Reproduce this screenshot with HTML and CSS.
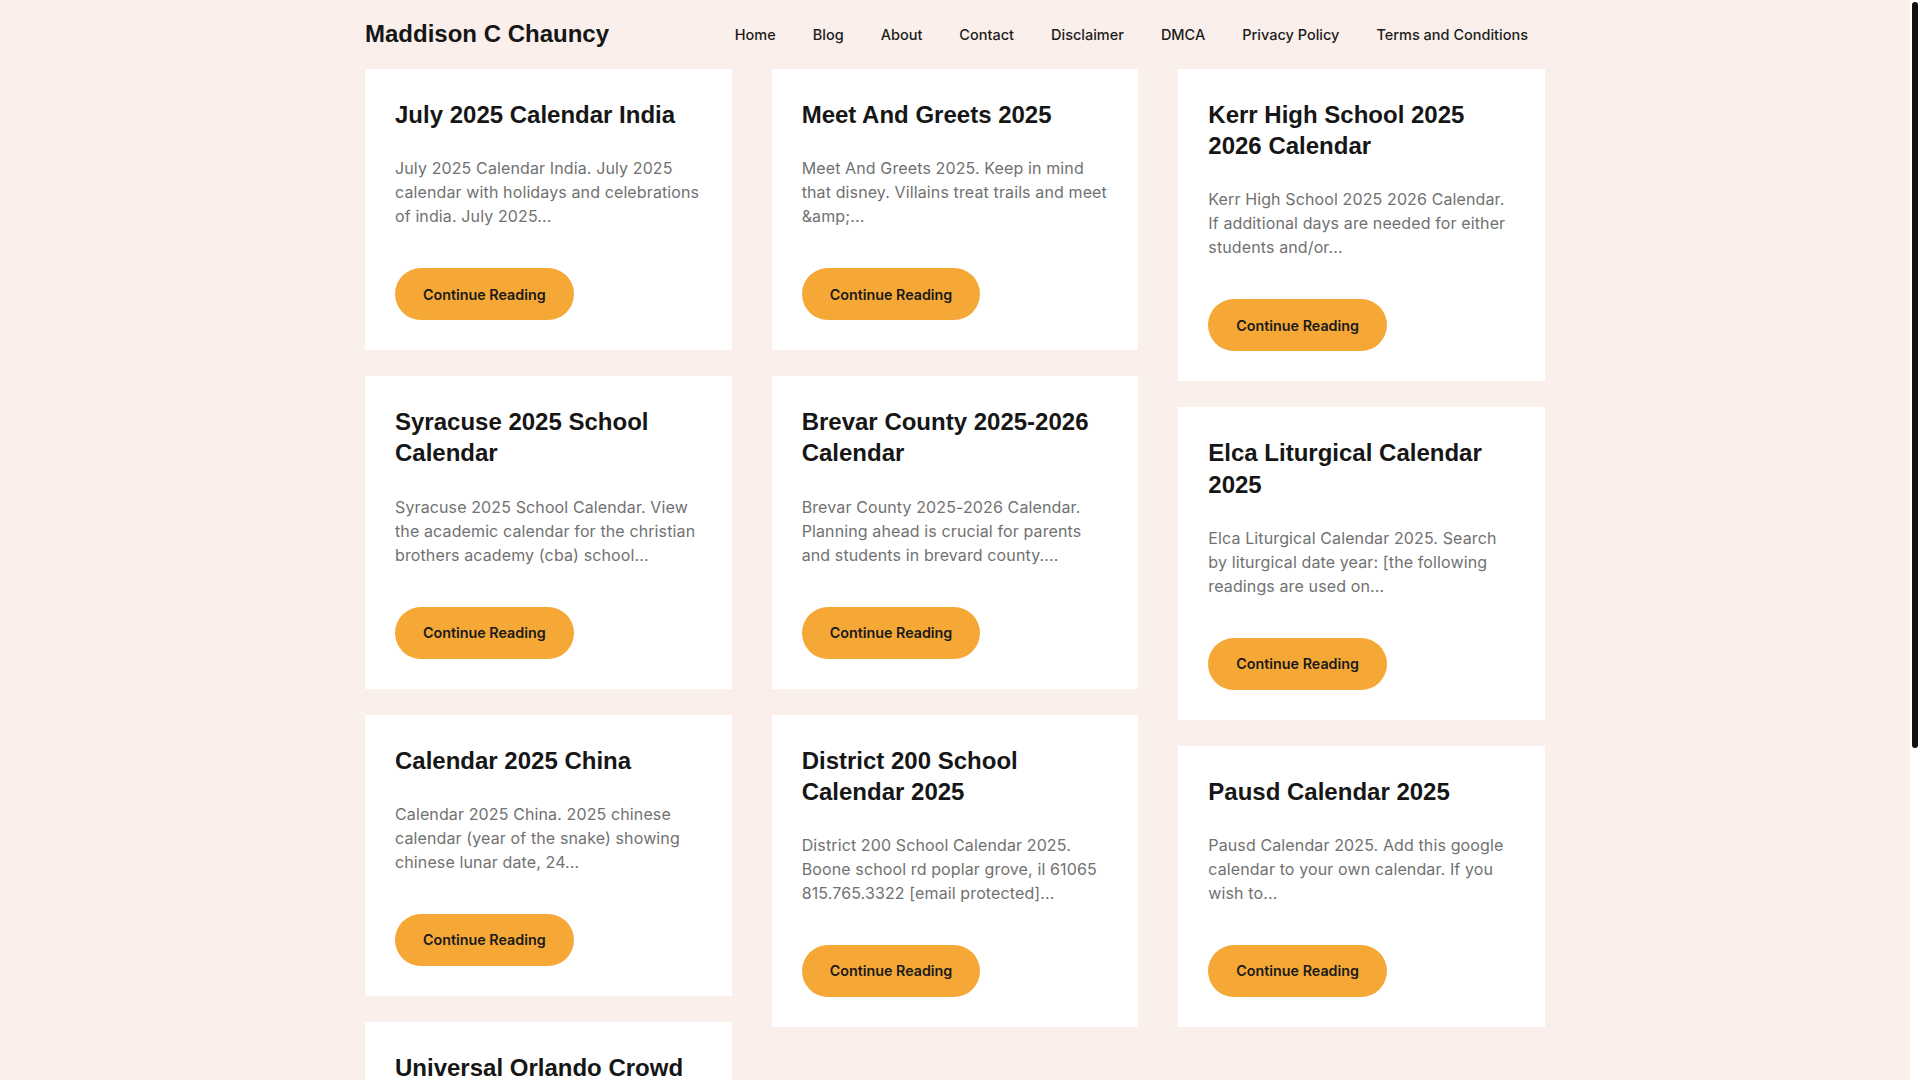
FILE: index.html
```html
<!DOCTYPE html>
<html lang="en">
<head>
<meta charset="utf-8">
<title>Maddison C Chauncy</title>
<link rel="stylesheet" href="styles.css">
</head>
<body>
<header class="site-header">
  <div class="container header-inner">
    <a class="site-title" href="#">Maddison C Chauncy</a>
    <nav class="main-nav">
      <ul>
        <li><a href="#">Home</a></li>
        <li><a href="#">Blog</a></li>
        <li><a href="#">About</a></li>
        <li><a href="#">Contact</a></li>
        <li><a href="#">Disclaimer</a></li>
        <li><a href="#">DMCA</a></li>
        <li><a href="#">Privacy Policy</a></li>
        <li><a href="#">Terms and Conditions</a></li>
      </ul>
    </nav>
  </div>
</header>

<main class="container posts">
  <div class="col">
    <article class="card">
      <h2>July 2025 Calendar India</h2>
      <p>July 2025 Calendar India. July 2025 calendar with holidays and celebrations of india. July 2025...</p>
      <a class="btn" href="#">Continue Reading</a>
    </article>
    <article class="card">
      <h2>Syracuse 2025 School Calendar</h2>
      <p>Syracuse 2025 School Calendar. View the academic calendar for the christian brothers academy (cba) school...</p>
      <a class="btn" href="#">Continue Reading</a>
    </article>
    <article class="card">
      <h2>Calendar 2025 China</h2>
      <p>Calendar 2025 China. 2025 chinese calendar (year of the snake) showing chinese lunar date, 24...</p>
      <a class="btn" href="#">Continue Reading</a>
    </article>
    <article class="card">
      <h2>Universal Orlando Crowd Calendar 2025</h2>
      <p>Universal Orlando Crowd Calendar 2025. Plan your visit with the crowd calendar for universal orlando...</p>
      <a class="btn" href="#">Continue Reading</a>
    </article>
  </div>
  <div class="col">
    <article class="card">
      <h2>Meet And Greets 2025</h2>
      <p>Meet And Greets 2025. Keep in mind that disney. Villains treat trails and meet &amp;amp;...</p>
      <a class="btn" href="#">Continue Reading</a>
    </article>
    <article class="card">
      <h2>Brevar County 2025-2026 Calendar</h2>
      <p>Brevar County 2025-2026 Calendar. Planning ahead is crucial for parents and students in brevard county....</p>
      <a class="btn" href="#">Continue Reading</a>
    </article>
    <article class="card">
      <h2>District 200 School Calendar 2025</h2>
      <p>District 200 School Calendar 2025. Boone school rd poplar grove, il 61065 815.765.3322 [email&#160;protected]...</p>
      <a class="btn" href="#">Continue Reading</a>
    </article>
  </div>
  <div class="col">
    <article class="card">
      <h2>Kerr High School 2025 2026 Calendar</h2>
      <p>Kerr High School 2025 2026 Calendar. If additional days are needed for either students and/or...</p>
      <a class="btn" href="#">Continue Reading</a>
    </article>
    <article class="card">
      <h2>Elca Liturgical Calendar 2025</h2>
      <p>Elca Liturgical Calendar 2025. Search by liturgical date year: [the following readings are used on...</p>
      <a class="btn" href="#">Continue Reading</a>
    </article>
    <article class="card">
      <h2>Pausd Calendar 2025</h2>
      <p>Pausd Calendar 2025. Add this google calendar to your own calendar. If you wish to...</p>
      <a class="btn" href="#">Continue Reading</a>
    </article>
  </div>
</main>

<footer class="site-footer">
  <div class="container footer-inner">
    <span>&copy; 2025 Maddison C Chauncy</span>
  </div>
</footer>

<div class="scrollbar" aria-hidden="true"><div class="scrollbar-thumb"></div></div>
</body>
</html>
```

FILE: styles.css
```css
html {
  background: #faefea;
}

body {
  margin: 0;
  padding-right: 10px;
  background: #faefea;
  color: #161616;
  font-family: Inter, "Noto Sans", sans-serif;
}

a {
  text-decoration: none;
  color: inherit;
}

.container {
  width: 1180px;
  margin: 0 auto;
}

.site-header {
  height: 69px;
}

.header-inner {
  height: 100%;
  display: flex;
  align-items: center;
  justify-content: space-between;
}

.site-title {
  font-family: "Liberation Sans", Arial, sans-serif;
  font-weight: 700;
  font-size: 24px;
  line-height: 1.2;
  color: #161616;
}

.main-nav ul {
  list-style: none;
  margin: 0;
  padding: 0 17px 0 0;
  display: flex;
  gap: 37px;
}

.main-nav a {
  font-family: Inter, sans-serif;
  font-weight: 500;
  font-size: 14.5px;
  line-height: 20px;
  color: #1c1c1c;
}

.posts {
  display: grid;
  grid-template-columns: repeat(3, 1fr);
  column-gap: 40px;
  align-items: start;
}

.col {
  display: flex;
  flex-direction: column;
  gap: 26px;
}

.card {
  background: #ffffff;
  padding: 30px;
}

.card h2 {
  margin: 0 0 26px;
  font-family: "Liberation Sans", Arial, sans-serif;
  font-weight: 700;
  font-size: 24px;
  line-height: 1.3;
  color: #161616;
}

.card p {
  margin: 0 0 40px;
  font-family: Inter, sans-serif;
  font-size: 16px;
  line-height: 24px;
  letter-spacing: 0.12px;
  color: #717171;
}

.btn {
  display: inline-flex;
  align-items: center;
  height: 52px;
  padding: 0 28px;
  border-radius: 26px;
  background: #f5a836;
  color: #1a1a1a;
  font-family: Inter, sans-serif;
  font-weight: 600;
  font-size: 14.3px;
}

.site-footer {
  margin-top: 60px;
  padding: 60px 0 50px;
}

.footer-inner {
  font-size: 14px;
  color: #717171;
  text-align: center;
}

.scrollbar {
  position: fixed;
  top: 0;
  right: 0;
  width: 10px;
  height: 100vh;
  background: #ffffff;
}

.scrollbar-thumb {
  margin: 2px 2px 0;
  height: 746px;
  background: #111111;
  border-radius: 3px;
}
```
